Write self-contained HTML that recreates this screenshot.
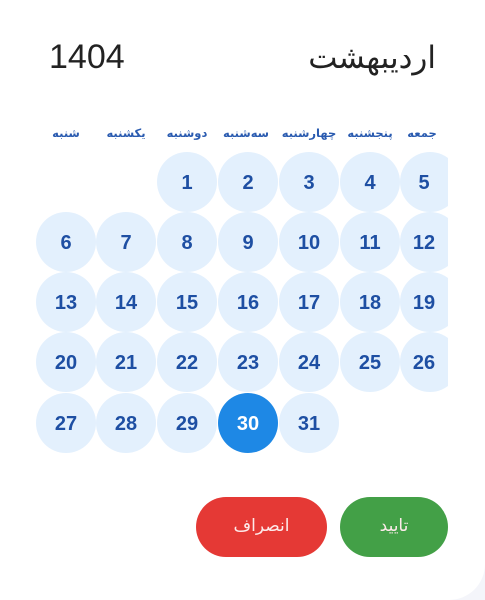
<!DOCTYPE html>
<html><head><meta charset="utf-8"><style>
html,body{margin:0;padding:0;}
body{width:485px;height:600px;background:#f4f5fa;position:relative;overflow:hidden;font-family:"Liberation Sans","DejaVu Sans",sans-serif;}
.card{position:absolute;left:0;top:0;width:485px;height:600px;background:#fff;border-radius:0 0 36px 0;}
.yr{position:absolute;left:49px;top:38px;font-size:34px;color:#222;}
.mo{position:absolute;right:49px;top:40px;font-size:31px;color:#222;font-family:"DejaVu Sans",sans-serif;direction:rtl;}
.wd{position:absolute;top:126px;font-size:11.5px;font-weight:bold;color:#2a5bb0;font-family:"DejaVu Sans",sans-serif;transform:translateX(-50%);white-space:nowrap;direction:rtl;}
.grid{position:absolute;left:0;top:0;width:448px;height:470px;overflow:hidden;}
.c{position:absolute;width:60px;height:60px;border-radius:50%;background:#e3f0fd;}
.n{position:absolute;width:60px;height:60px;line-height:62px;text-align:center;font-size:20px;font-weight:bold;color:#1e4fa3;}
.sel{background:#1e88e5;}
.seln{color:#fff;}
.btn{position:absolute;top:497px;height:60px;border-radius:30px;color:#fdeaea;font-size:17px;text-align:center;line-height:58px;font-family:"DejaVu Sans",sans-serif;}
</style></head><body><div class="card">
<div class="yr">1404</div>
<div class="mo">اردیبهشت</div>
<div class="wd" style="left:66px">شنبه</div>
<div class="wd" style="left:126px">یکشنبه</div>
<div class="wd" style="left:187px">دوشنبه</div>
<div class="wd" style="left:246px">سه‌شنبه</div>
<div class="wd" style="left:309px">چهارشنبه</div>
<div class="wd" style="left:370px">پنجشنبه</div>
<div class="wd" style="left:422px">جمعه</div>
<div class="grid" id="g"></div>
<div class="btn" style="left:196px;width:131px;background:#e53935">انصراف</div>
<div class="btn" style="left:340px;width:108px;background:#43a047">تایید</div>
</div>
<script>
var g=document.getElementById('g');
var L=[36,96,157,218,279,340,400];
var T=[152,212,272,332,393];
var h='';
for(var d=1;d<=31;d++){
 var pos=d-1+2, r=Math.floor(pos/7), col=pos%7;
 var x=L[col], y=T[r];
 var tx = col==6? x-6 : x;
 h+='<div class="c'+(d==30?' sel':'')+'" style="left:'+x+'px;top:'+y+'px"></div>';
 h+='<div class="n'+(d==30?' seln':'')+'" style="left:'+tx+'px;top:'+y+'px">'+d+'</div>';
}
g.innerHTML=h;
</script>
</body></html>
